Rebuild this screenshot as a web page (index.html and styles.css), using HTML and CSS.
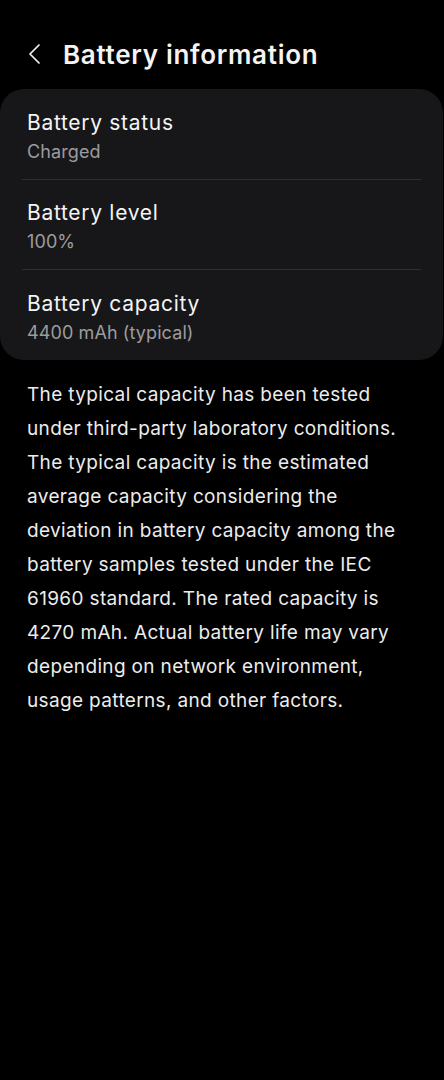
FILE: index.html
```html
<!DOCTYPE html>
<html>
<head>
<meta charset="utf-8">
<link rel="stylesheet" href="styles.css">
</head>
<body>
<div class="page">
  <header class="header">
    <svg class="back" width="13" height="20" viewBox="0 0 13 20"><path d="M11 1 L2 10 L11 19" fill="none" stroke="#f2f2f2" stroke-width="1.7" stroke-linecap="round" stroke-linejoin="round"/></svg>
    <h1 class="title">Battery information</h1>
  </header>
  <section class="card">
    <div class="row">
      <div class="row-title">Battery status</div>
      <div class="row-sub">Charged</div>
    </div>
    <div class="divider"></div>
    <div class="row">
      <div class="row-title">Battery level</div>
      <div class="row-sub">100%</div>
    </div>
    <div class="divider"></div>
    <div class="row">
      <div class="row-title">Battery capacity</div>
      <div class="row-sub">4400 mAh (typical)</div>
    </div>
  </section>
  <p class="note">The typical capacity has been tested under third-party laboratory conditions. The typical capacity is the estimated average capacity considering the deviation in battery capacity among the battery samples tested under the IEC 61960 standard. The rated capacity is 4270 mAh. Actual battery life may vary depending on network environment, usage patterns, and other factors.</p>
</div>
</body>
</html>
```
FILE: styles.css
```css
html, body {
  margin: 0;
  padding: 0;
  background: #000;
}
body {
  font-family: Inter, Roboto, "Noto Sans", sans-serif;
  color: #f2f2f2;
  width: 444px;
  height: 1080px;
}
.page {
  display: flex;
  flex-direction: column;
}
.header {
  display: flex;
  align-items: center;
  height: 89px;
  padding: 19px 0 0 28px;
  box-sizing: border-box;
}
.back {
  margin-right: 22px;
}
.title {
  margin: 0;
  font-size: 26px;
  font-weight: 600;
  letter-spacing: 0.7px;
  color: #f4f4f4;
}
.card {
  background: #17171a;
  border-radius: 24px;
  margin: 0 1px 0 0;
  padding: 0 22px;
  display: flex;
  flex-direction: column;
}
.row {
  height: 89.5px;
  display: flex;
  flex-direction: column;
  justify-content: center;
  padding: 6px 0 0 5px;
  box-sizing: border-box;
}
.row-title {
  font-size: 21px;
  color: #f4f4f4;
  line-height: 30px;
  letter-spacing: 0.7px;
}
.row-sub {
  font-size: 18px;
  color: #9c9c9f;
  line-height: 28px;
  letter-spacing: 0.1px;
}
.divider {
  height: 1px;
  background: #2e2e31;
}
.note {
  margin: 18px 0 0 0;
  padding: 0 22px 0 27px;
  font-size: 19px;
  line-height: 34px;
  letter-spacing: 0.35px;
  color: #ececec;
}
```
